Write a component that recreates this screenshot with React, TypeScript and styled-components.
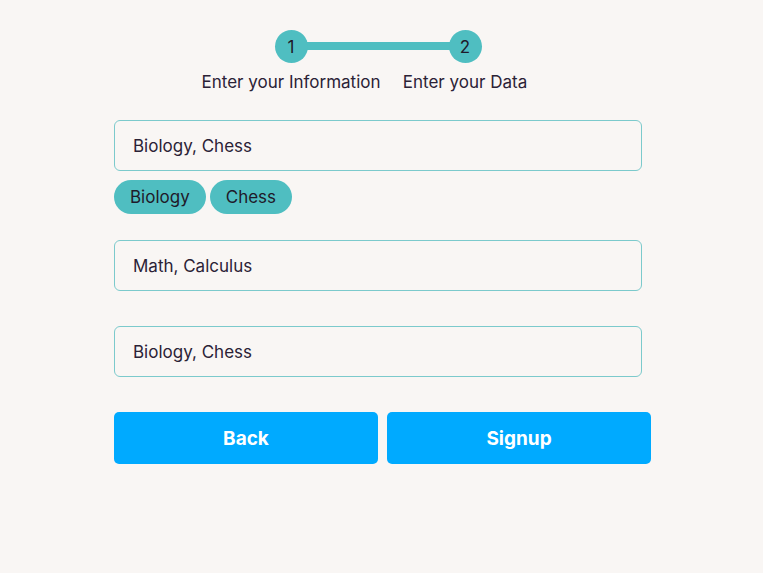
import React, { useState } from "react";
import { styled, createGlobalStyle } from "styled-components";

const teal = "#4fbec1";

const GlobalStyle = createGlobalStyle`
  * { box-sizing: border-box; }
  body {
    margin: 0;
    background: #f9f6f4;
    font-family: Inter, "Noto Sans", sans-serif;
    color: #2b2236;
  }
`;

const steps = ["Enter your Information", "Enter your Data"];

const App = () => {
  const [interests, setInterests] = useState("Biology, Chess");
  const [subjects, setSubjects] = useState("Math, Calculus");
  const [hobbies, setHobbies] = useState("Biology, Chess");

  const tags = interests
    .split(",")
    .map((t) => t.trim())
    .filter(Boolean);

  return (
    <>
      <GlobalStyle />
      <Page>
        <Stepper>
          {steps.map((label, i) => (
            <Step key={label} $first={i === 0} $last={i === steps.length - 1}>
              <Circle>{i + 1}</Circle>
              <StepLabel>{label}</StepLabel>
            </Step>
          ))}
        </Stepper>
        <Form onSubmit={(e) => e.preventDefault()}>
          <Field>
            <TextInput
              value={interests}
              onChange={(e) => setInterests(e.target.value)}
            />
            <Chips>
              {tags.map((t) => (
                <Chip key={t}>{t}</Chip>
              ))}
            </Chips>
          </Field>
          <Field>
            <TextInput
              value={subjects}
              onChange={(e) => setSubjects(e.target.value)}
            />
          </Field>
          <Field>
            <TextInput
              value={hobbies}
              onChange={(e) => setHobbies(e.target.value)}
            />
          </Field>
          <ButtonRow>
            <Button type="button">Back</Button>
            <Button type="submit">Signup</Button>
          </ButtonRow>
        </Form>
      </Page>
    </>
  );
};

export default App;

const Page = styled.main`
  width: 537px;
  margin: 0 0 0 114px;
  padding-top: 30px;
`;

const Stepper = styled.ol`
  list-style: none;
  margin: 0;
  padding: 0;
  width: 528px;
  display: flex;
  justify-content: center;
`;

const Step = styled.li<{ $first: boolean; $last: boolean }>`
  position: relative;
  width: 174px;
  display: flex;
  flex-direction: column;
  align-items: center;

  &::before {
    content: "";
    position: absolute;
    top: 12px;
    height: 8px;
    background: ${teal};
    left: ${(p) => (p.$first ? "50%" : "0")};
    right: ${(p) => (p.$last ? "50%" : "0")};
  }
`;

const Circle = styled.span`
  position: relative;
  width: 33px;
  height: 33px;
  border-radius: 50%;
  background: ${teal};
  display: flex;
  align-items: center;
  justify-content: center;
  font-size: 17px;
  color: #1f1a2a;
`;

const StepLabel = styled.span`
  margin-top: 9px;
  font-size: 17px;
  white-space: nowrap;
`;

const Form = styled.form`
  margin-top: 28px;
  display: flex;
  flex-direction: column;
`;

const Field = styled.div`
  width: 528px;
  min-height: 51px;
  margin-bottom: 35px;

  &:first-child {
    margin-bottom: 26px;
  }
`;

const TextInput = styled.input`
  display: block;
  width: 100%;
  height: 51px;
  padding: 0 18px;
  border: 1px solid #7ccacc;
  border-radius: 6px;
  background: transparent;
  font-family: inherit;
  font-size: 17px;
  color: #2b2236;
  &:focus {
    outline: none;
  }
`;

const Chips = styled.div`
  display: flex;
  gap: 4px;
  margin-top: 9px;
`;

const Chip = styled.span`
  height: 34px;
  padding: 0 16px;
  border-radius: 17px;
  background: ${teal};
  display: flex;
  align-items: center;
  font-size: 17px;
  color: #1f1a2a;
`;

const ButtonRow = styled.div`
  display: grid;
  grid-template-columns: 1fr 1fr;
  gap: 9px;
`;

const Button = styled.button`
  height: 52px;
  border: none;
  border-radius: 5px;
  background: #00aaff;
  color: #fff;
  font-family: inherit;
  font-size: 19px;
  font-weight: 700;
  cursor: pointer;
`;
